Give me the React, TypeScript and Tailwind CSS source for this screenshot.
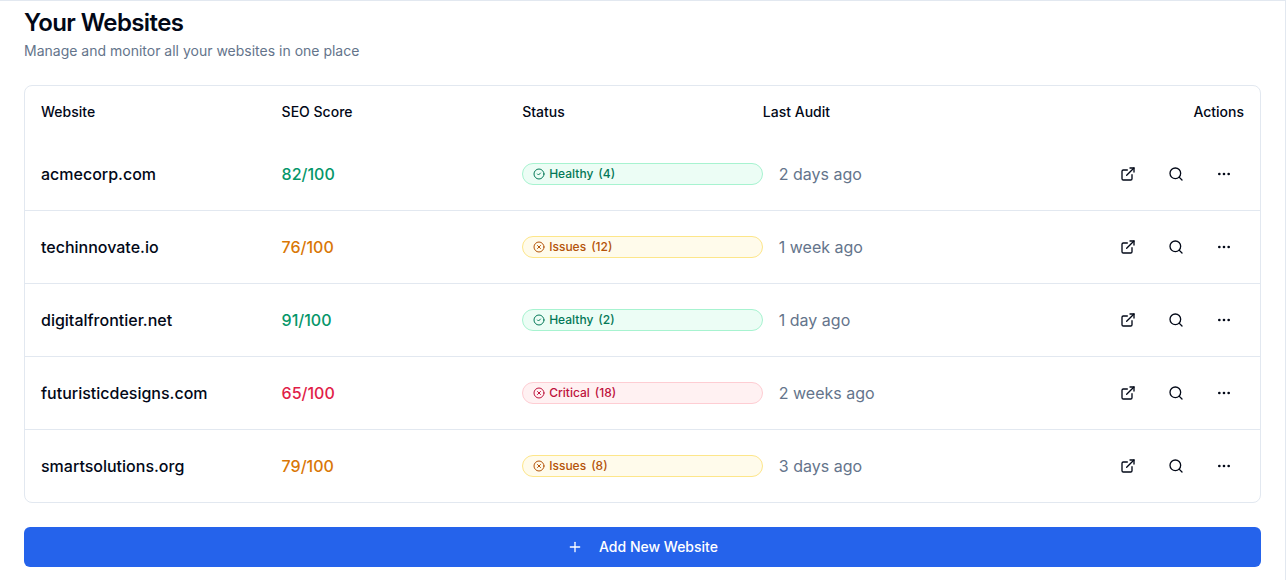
import React from 'react';
import { CircleCheck, CircleX, Ellipsis, ExternalLink, Plus, Search } from 'lucide-react';

type Status = 'healthy' | 'issues' | 'critical';

interface Site {
  domain: string;
  score: number;
  status: Status;
  count: number;
  audit: string;
}

const sites: Site[] = [
  { domain: 'acmecorp.com', score: 82, status: 'healthy', count: 4, audit: '2 days ago' },
  { domain: 'techinnovate.io', score: 76, status: 'issues', count: 12, audit: '1 week ago' },
  { domain: 'digitalfrontier.net', score: 91, status: 'healthy', count: 2, audit: '1 day ago' },
  { domain: 'futuristicdesigns.com', score: 65, status: 'critical', count: 18, audit: '2 weeks ago' },
  { domain: 'smartsolutions.org', score: 79, status: 'issues', count: 8, audit: '3 days ago' },
];

const scoreColor: Record<Status, string> = {
  healthy: 'text-[#059669]',
  issues: 'text-[#d97706]',
  critical: 'text-[#e11d48]',
};

const badgeStyle: Record<Status, string> = {
  healthy: 'bg-[#ecfdf5] border-[#a7f3d0] text-[#047857]',
  issues: 'bg-[#fffbeb] border-[#fde68a] text-[#b45309]',
  critical: 'bg-[#fff1f2] border-[#fecdd3] text-[#be123c]',
};

const badgeLabel: Record<Status, string> = {
  healthy: 'Healthy',
  issues: 'Issues',
  critical: 'Critical',
};

const StatusBadge = ({ status, count }: { status: Status; count: number }) => {
  const Icon = status === 'healthy' ? CircleCheck : CircleX;
  return (
    <div className={`flex h-[22px] items-center rounded-full border px-2.5 text-xs font-medium ${badgeStyle[status]}`}>
      <Icon className="mr-1 h-3 w-3" />
      <span>{badgeLabel[status]}</span>
      <span className="ml-[5px]">({count})</span>
    </div>
  );
};

const App = () => {
  return (
    <div className="mr-px min-h-[580px] border-t border-r border-[#e2e8f0] bg-white px-6 pt-[6px] font-['Inter',sans-serif] text-[#020817]">
      <h1 className="text-2xl font-semibold tracking-tight">Your Websites</h1>
      <p className="mt-[2px] text-sm text-[#64748b]">Manage and monitor all your websites in one place</p>

      <div className="mt-6 rounded-lg border border-[#e2e8f0]">
        <div className="grid h-[52px] grid-cols-5 items-center px-4 text-sm font-medium">
          <div>Website</div>
          <div>SEO Score</div>
          <div>Status</div>
          <div>Last Audit</div>
          <div className="text-right">Actions</div>
        </div>
        {sites.map((site, i) => (
          <div
            key={site.domain}
            className={`grid h-[73px] grid-cols-5 items-center px-4 last:h-[72px] ${i < sites.length - 1 ? 'border-b border-[#e2e8f0]' : ''}`}
          >
            <div className="font-medium">{site.domain}</div>
            <div className={`font-medium ${scoreColor[site.status]}`}>{site.score}/100</div>
            <StatusBadge status={site.status} count={site.count} />
            <div className="px-4 text-[#64748b]">{site.audit}</div>
            <div className="flex justify-end gap-2">
              <button className="flex h-10 w-10 items-center justify-center">
                <ExternalLink className="h-4 w-4" />
              </button>
              <button className="flex h-10 w-10 items-center justify-center">
                <Search className="h-4 w-4" />
              </button>
              <button className="flex h-10 w-10 items-center justify-center">
                <Ellipsis className="h-4 w-4" />
              </button>
            </div>
          </div>
        ))}
      </div>

      <button className="mt-6 flex h-10 w-full items-center justify-center gap-4 rounded-md bg-[#2563eb] text-sm font-medium text-white">
        <Plus className="h-4 w-4" />
        <span>Add New Website</span>
      </button>
    </div>
  );
};

export default App;
